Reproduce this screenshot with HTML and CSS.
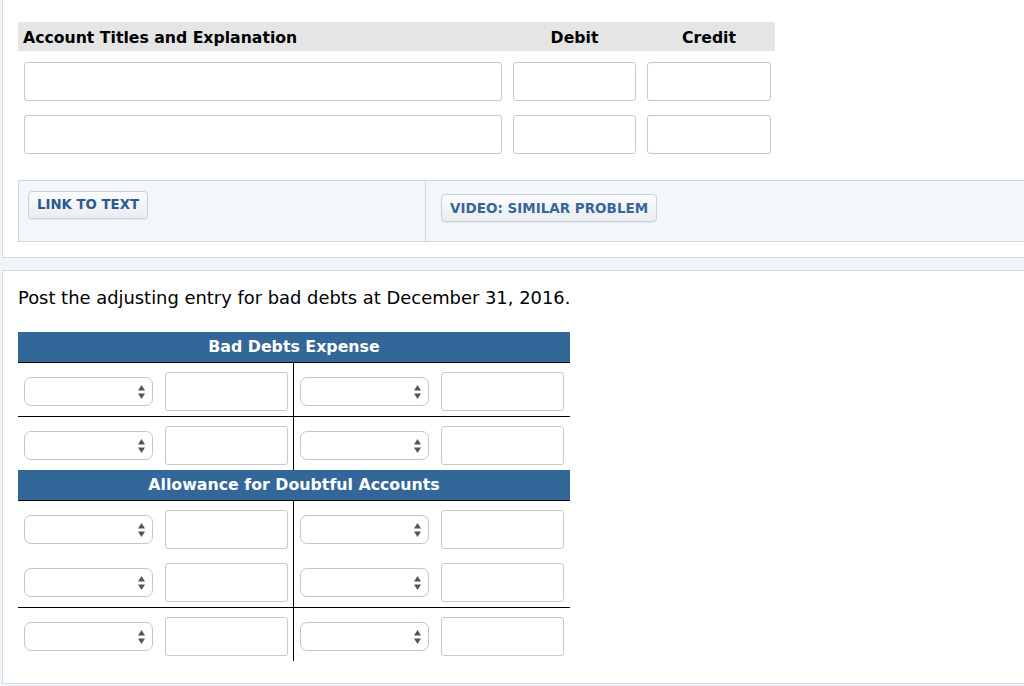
FILE: index.html
```html
<!DOCTYPE html>
<html lang="en">
<head>
<meta charset="utf-8">
<title>Adjusting entry</title>
<link rel="stylesheet" href="styles.css">
</head>
<body>
<div class="page">
  <section class="panel panel-top">
    <div class="journal">
      <div class="journal-row journal-head">
        <div class="head-cell head-account">Account Titles and Explanation</div>
        <div class="head-cell head-center">Debit</div>
        <div class="head-cell head-center">Credit</div>
      </div>
      <div class="journal-row journal-line">
        <input class="field" type="text">
        <input class="field" type="text">
        <input class="field" type="text">
      </div>
      <div class="journal-row journal-line">
        <input class="field" type="text">
        <input class="field" type="text">
        <input class="field" type="text">
      </div>
    </div>
    <div class="links">
      <div class="links-cell links-left"><span class="btn">LINK TO TEXT</span></div>
      <div class="links-cell links-right"><span class="btn btn-video">VIDEO: SIMILAR PROBLEM</span></div>
    </div>
  </section>

  <section class="panel panel-bottom">
    <p class="prompt">Post the adjusting entry for bad debts at December 31, 2016.</p>

    <div class="taccount">
      <div class="t-head">Bad Debts Expense</div>
      <div class="t-group">
        <div class="t-side t-left">
          <div class="entry"><div class="select"><svg class="arrows" width="7" height="14" viewBox="0 0 7 14"><polygon points="3.5,0 7,5.6 0,5.6"/><polygon points="0,8.4 7,8.4 3.5,14"/></svg></div><input class="field amt" type="text"></div>
        </div>
        <div class="t-side t-right">
          <div class="entry"><div class="select"><svg class="arrows" width="7" height="14" viewBox="0 0 7 14"><polygon points="3.5,0 7,5.6 0,5.6"/><polygon points="0,8.4 7,8.4 3.5,14"/></svg></div><input class="field amt" type="text"></div>
        </div>
      </div>
      <div class="t-group">
        <div class="t-side t-left">
          <div class="entry"><div class="select"><svg class="arrows" width="7" height="14" viewBox="0 0 7 14"><polygon points="3.5,0 7,5.6 0,5.6"/><polygon points="0,8.4 7,8.4 3.5,14"/></svg></div><input class="field amt" type="text"></div>
        </div>
        <div class="t-side t-right">
          <div class="entry"><div class="select"><svg class="arrows" width="7" height="14" viewBox="0 0 7 14"><polygon points="3.5,0 7,5.6 0,5.6"/><polygon points="0,8.4 7,8.4 3.5,14"/></svg></div><input class="field amt" type="text"></div>
        </div>
      </div>
    </div>

    <div class="taccount">
      <div class="t-head">Allowance for Doubtful Accounts</div>
      <div class="t-group">
        <div class="t-side t-left">
          <div class="entry"><div class="select"><svg class="arrows" width="7" height="14" viewBox="0 0 7 14"><polygon points="3.5,0 7,5.6 0,5.6"/><polygon points="0,8.4 7,8.4 3.5,14"/></svg></div><input class="field amt" type="text"></div>
          <div class="entry"><div class="select"><svg class="arrows" width="7" height="14" viewBox="0 0 7 14"><polygon points="3.5,0 7,5.6 0,5.6"/><polygon points="0,8.4 7,8.4 3.5,14"/></svg></div><input class="field amt" type="text"></div>
        </div>
        <div class="t-side t-right">
          <div class="entry"><div class="select"><svg class="arrows" width="7" height="14" viewBox="0 0 7 14"><polygon points="3.5,0 7,5.6 0,5.6"/><polygon points="0,8.4 7,8.4 3.5,14"/></svg></div><input class="field amt" type="text"></div>
          <div class="entry"><div class="select"><svg class="arrows" width="7" height="14" viewBox="0 0 7 14"><polygon points="3.5,0 7,5.6 0,5.6"/><polygon points="0,8.4 7,8.4 3.5,14"/></svg></div><input class="field amt" type="text"></div>
        </div>
      </div>
      <div class="t-group t-last">
        <div class="t-side t-left">
          <div class="entry"><div class="select"><svg class="arrows" width="7" height="14" viewBox="0 0 7 14"><polygon points="3.5,0 7,5.6 0,5.6"/><polygon points="0,8.4 7,8.4 3.5,14"/></svg></div><input class="field amt" type="text"></div>
        </div>
        <div class="t-side t-right">
          <div class="entry"><div class="select"><svg class="arrows" width="7" height="14" viewBox="0 0 7 14"><polygon points="3.5,0 7,5.6 0,5.6"/><polygon points="0,8.4 7,8.4 3.5,14"/></svg></div><input class="field amt" type="text"></div>
        </div>
      </div>
    </div>
  </section>
</div>
</body>
</html>
```

FILE: styles.css
```css
html, body {
  margin: 0;
  padding: 0;
  overflow: hidden;
}
body {
  background: #f3f6f9;
  font-family: "DejaVu Sans", Verdana, sans-serif;
  color: #000;
}
.page {
  padding-left: 2px;
  width: 1100px;
}
.panel {
  background: #fff;
  border: 1px solid #d3dbe4;
  box-sizing: border-box;
  width: 1098px;
}
.panel-top {
  border-top: 0;
  padding: 22px 0 15px 15px;
}
.panel-bottom {
  margin-top: 12px;
  padding: 16px 0 22px 15px;
}

/* journal */
.journal {
  width: 757px;
}
.journal-row {
  display: grid;
  grid-template-columns: 478px 123px 124px;
  column-gap: 11px;
  padding: 0 4px 0 6px;
}
.journal-head {
  background: #e5e5e5;
  height: 29px;
  align-items: center;
}
.head-cell {
  font-weight: bold;
  font-size: 15.7px;
  line-height: 29px;
  padding-top: 1px;
}
.head-account {
  margin-left: -1px;
}
.head-center {
  text-align: center;
}
.journal-line {
  margin-top: 11px;
}
.journal-line + .journal-line {
  margin-top: 14px;
}
.field {
  display: block;
  box-sizing: border-box;
  height: 39px;
  margin: 0;
  border: 1px solid #c9c9c9;
  border-radius: 3px;
  background: #fff;
  width: 100%;
}

/* links bar */
.links {
  margin-top: 26px;
  display: flex;
  height: 62px;
  box-sizing: border-box;
  border: 1px solid #cfd8e2;
  border-right: 0;
  background: #f4f7fa;
}
.links-cell {
  box-sizing: border-box;
}
.links-left {
  width: 406px;
  padding: 10px 0 0 9px;
}
.links-right {
  flex: 1;
  border-left: 1px solid #cfd8e2;
  padding: 13px 0 0 15px;
}
.btn {
  display: inline-block;
  box-sizing: border-box;
  height: 28px;
  line-height: 26px;
  padding: 0 8px 0 8px;
  border: 1px solid #c9d1db;
  border-radius: 4px;
  background: linear-gradient(#fbfcfd, #e9edf1);
  box-shadow: 0 1px 1px rgba(0, 0, 0, 0.06);
  color: #2c5a8e;
  font-weight: bold;
  font-size: 13.3px;
  white-space: nowrap;
}
.btn-video {
  color: #3a6599;
  font-size: 13.5px;
}

/* prompt */
.prompt {
  margin: 0 0 23px 0;
  font-size: 17.9px;
  line-height: 22px;
}

/* T accounts */
.taccount {
  width: 552px;
}
.t-head {
  background: #336699;
  color: #fff;
  font-weight: bold;
  font-size: 15.8px;
  height: 30px;
  line-height: 29px;
  text-align: center;
}
.t-group {
  display: grid;
  grid-template-columns: 276px 276px;
  border-top: 1px solid #000;
}
.t-left {
  border-right: 1px solid #000;
  padding-left: 6px;
}
.t-right {
  padding-left: 6px;
}
.t-side {
  box-sizing: border-box;
}
.entry {
  display: flex;
  align-items: center;
  gap: 12px;
  padding: 9px 0 5px 0;
}
.select {
  box-sizing: border-box;
  width: 129px;
  height: 29px;
  border: 1px solid #c6c6c6;
  border-radius: 7px;
  background: #fff;
  display: flex;
  align-items: center;
  justify-content: flex-end;
  padding-right: 7px;
}
.arrows {
  fill: #555;
  display: block;
}
.amt {
  width: 123px;
  flex: none;
}
```
